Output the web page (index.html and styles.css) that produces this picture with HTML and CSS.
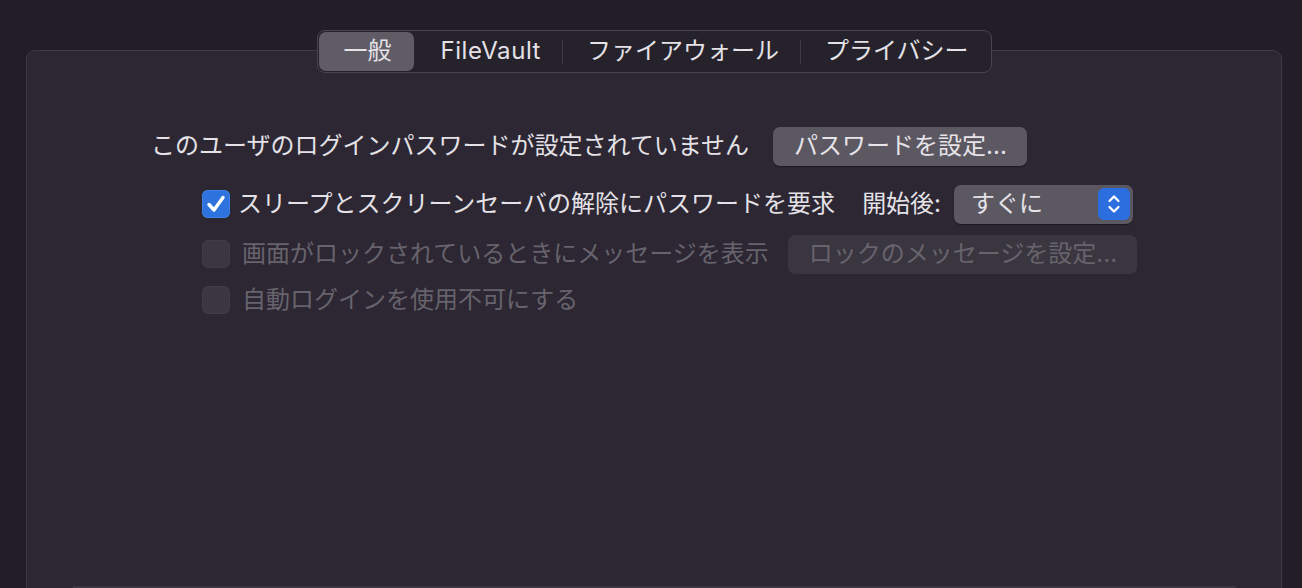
FILE: index.html
```html
<!DOCTYPE html>
<html lang="ja">
<head>
<meta charset="utf-8">
<link rel="stylesheet" href="styles.css">
</head>
<body>
<div class="window">
  <div class="tabs">
    <div class="tab selected">一般</div>
    <div class="tab latin">FileVault</div>
    <div class="sep"></div>
    <div class="tab">ファイアウォール</div>
    <div class="sep"></div>
    <div class="tab">プライバシー</div>
  </div>
  <div class="panel">
    <div class="row row1">
      <span class="label">このユーザのログインパスワードが設定されていません</span>
      <button class="btn btn-set">パスワードを設定...</button>
    </div>
    <div class="row row2 indent">
      <span class="check checked">
        <svg viewBox="0 0 28 28" width="28" height="28"><path d="M7 14.5 L12 20 L21 7.5" fill="none" stroke="#fff" stroke-width="3.4" stroke-linecap="round" stroke-linejoin="round"/></svg>
      </span>
      <span class="label">スリープとスクリーンセーバの解除にパスワードを要求</span>
      <span class="label after">開始後:</span>
      <span class="popup">
        <span class="popup-text">すぐに</span>
        <span class="stepper">
          <svg viewBox="0 0 32 32" width="32" height="32"><path d="M11.5 13 L16 8.5 L20.5 13 M11.5 19 L16 23.5 L20.5 19" fill="none" stroke="#fff" stroke-width="2.2" stroke-linecap="round" stroke-linejoin="round"/></svg>
        </span>
      </span>
    </div>
    <div class="row row3 indent">
      <span class="check disabled"></span>
      <span class="label dim">画面がロックされているときにメッセージを表示</span>
      <button class="btn btn-dim">ロックのメッセージを設定...</button>
    </div>
    <div class="row row4 indent">
      <span class="check disabled"></span>
      <span class="label dim">自動ログインを使用不可にする</span>
    </div>
    <div class="list"></div>
  </div>
</div>
</body>
</html>
```

FILE: styles.css
```css
html, body {
  margin: 0;
  padding: 0;
  background: #221e28;
  overflow: hidden;
}
body {
  font-family: Inter, "Noto Sans CJK JP", sans-serif;
  color: #e4e2e7;
  font-size: 24px;
  width: 1302px;
  height: 588px;
}
.window {
  padding-top: 30px;
  padding-left: 26px;
  width: 1256px;
  height: 558px;
  overflow: hidden;
  display: flex;
  flex-direction: column;
}
.tabs {
  position: relative;
  z-index: 1;
  align-self: center;
  margin-left: 1px;
  display: flex;
  align-items: center;
  height: 41px;
  padding: 0 1px 0 1px;
  border: 1px solid #48444e;
  border-radius: 8px;
  background: #26222c;
  flex: none;
}
.tab {
  height: 39px;
  line-height: 38px;
  padding: 0 21px 0 24px;
  border-radius: 7px;
  white-space: nowrap;
}
.tab.latin { letter-spacing: 0.55px; padding-left: 26px; }
.tab.selected {
  background: #605c66;
  padding: 0 23px 0 24px;
}
.sep {
  width: 1px;
  height: 24px;
  background: #3e3a44;
}
.panel {
  margin-top: -23px;
  height: 600px;
  flex: none;
  border: 1px solid #3e3a46;
  border-radius: 9px;
  background: #2c2733;
  display: flex;
  flex-direction: column;
  padding: 75px 0 0 125px;
  box-sizing: border-box;
}
.row {
  display: flex;
  align-items: center;
  white-space: nowrap;
  flex: none;
}
.row1 { height: 40px; margin-left: -1px; }
.row2 { height: 40px; margin-top: 18px; }
.row3 { height: 40px; margin-top: 10px; }
.row4 { height: 28px; margin-top: 12px; }
.indent { padding-left: 50px; }
.label { line-height: 1; }
.row1 .label { margin-right: 24px; }
.row2 .check { margin-right: 8px; }
.row3 .check, .row4 .check { margin-right: 12px; }
.after { margin-left: 27px; margin-right: 13px; }
.dim { color: #67636c; }
.btn {
  font: inherit;
  font-size: 24px;
  height: 39px;
  border: none;
  border-radius: 7px;
  padding: 0 21px;
  color: #e6e4e8;
  background: #5c5862;
  box-shadow: 0 1px 1px rgba(0,0,0,0.35);
  line-height: 1;
  display: flex;
  align-items: center;
}
.btn-set { width: 254px; }
.btn-dim {
  margin-left: 19px;
  width: 349px;
  color: #67636c;
  background: #3a3640;
  box-shadow: none;
}
.check {
  width: 28px;
  height: 28px;
  border-radius: 6px;
  box-sizing: border-box;
  flex: none;
  display: block;
}
.check svg { display: block; }
.check.checked {
  background: #2e72dd;
  box-shadow: inset 0 0 0 1px #3c80e8;
}
.check.disabled {
  background: #3b3741;
  border: 1px solid #403c46;
}
.popup {
  width: 179px;
  height: 39px;
  border-radius: 7px;
  background: #5c5862;
  box-shadow: 0 1px 1px rgba(0,0,0,0.35);
  display: flex;
  align-items: center;
  justify-content: space-between;
  padding: 0 3px 0 17px;
  box-sizing: border-box;
}
.popup-text { line-height: 1; }
.stepper {
  width: 32px;
  height: 32px;
  border-radius: 6px;
  background: #2c6ee0;
  display: block;
}
.stepper svg { display: block; }
.list {
  margin-top: 272px;
  margin-left: -79px;
  margin-right: 45px;
  height: 12px;
  background: #3c3843;
  flex: none;
}
```
